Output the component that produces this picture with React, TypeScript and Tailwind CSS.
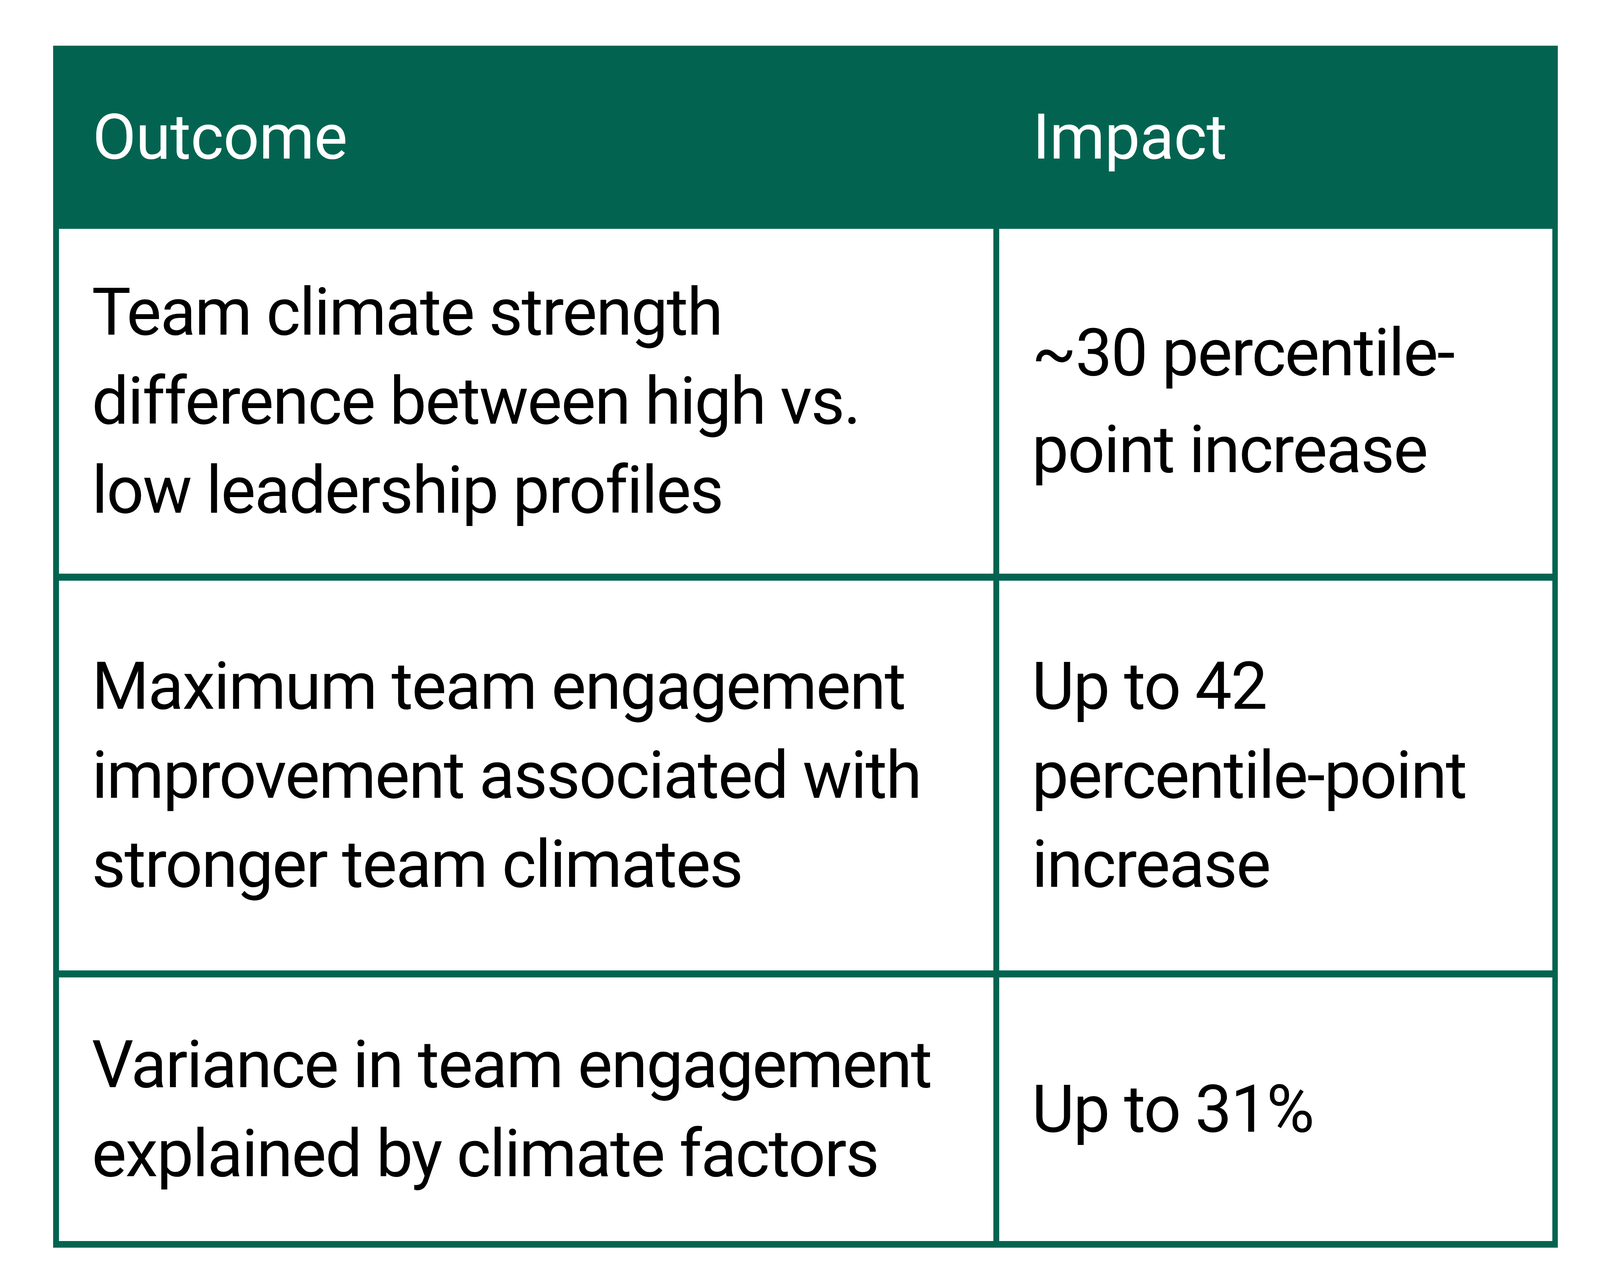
const rows = [
  {
    outcome: ["Team climate strength", "difference between high vs.", "low leadership profiles"],
    impact: ["~30 percentile-", "point increase"],
    impactLeading: "leading-[248px]",
  },
  {
    outcome: ["Maximum team engagement", "improvement associated with", "stronger team climates"],
    impact: ["Up to 42", "percentile-point", "increase"],
    impactLeading: "leading-[228px]",
  },
  {
    outcome: ["Variance in team engagement", "explained by climate factors"],
    impact: ["Up to 31%"],
    impactLeading: "leading-[236px]",
  },
];

export default function App() {
  return (
    <div
      className="w-full h-[3265px] bg-white pl-[136.3px] pt-[117px]"
      style={{ fontFamily: "Roboto, 'Noto Sans', sans-serif" }}
    >
      <div className="w-[3852px] bg-[#026450] px-[14.67px] py-[17px]">
        <div className="grid grid-cols-[2392px_1416px] grid-rows-[434px_883px_998px_675px] gap-x-[14.67px] gap-y-[18px]">
          {/* Header */}
          <div className="flex items-center pl-[86px] text-[162px] tracking-[-1px] text-white">
            Outcome
          </div>
          <div className="flex items-center pl-[86px] text-[162px] tracking-[-1px] text-white">
            Impact
          </div>

          {/* Body */}
          {rows.map((row, i) => (
            <div key={i} className="contents">
              <div className="bg-white flex flex-col justify-center items-start pl-[84px] text-[168px] tracking-[-3px] leading-[228px] text-black">
                {row.outcome.map((line) => (
                  <span key={line} className="whitespace-nowrap">
                    {line}
                  </span>
                ))}
              </div>
              <div
                className={`bg-white flex flex-col justify-center items-start pl-[84px] text-[168px] tracking-[-3px] text-black ${row.impactLeading}`}
              >
                {row.impact.map((line) => (
                  <span key={line} className="whitespace-nowrap">
                    {line}
                  </span>
                ))}
              </div>
            </div>
          ))}
        </div>
      </div>
    </div>
  );
}
